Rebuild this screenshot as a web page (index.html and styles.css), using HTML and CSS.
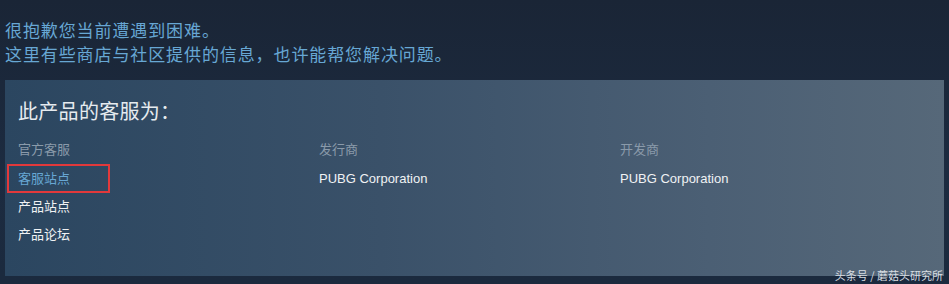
FILE: index.html
```html
<!DOCTYPE html>
<html lang="zh">
<head>
<meta charset="utf-8">
<link rel="stylesheet" href="styles.css">
</head>
<body>
<div class="page">
  <div class="intro">
    <p>很抱歉您当前遭遇到困难。</p>
    <p>这里有些商店与社区提供的信息，也许能帮您解决问题。</p>
  </div>
  <div class="panel">
    <h2 class="title">此产品的客服为：</h2>
    <div class="cols">
      <div class="col">
        <div class="label">官方客服</div>
        <a class="link link-blue highlighted">客服站点</a>
        <a class="link">产品站点</a>
        <a class="link">产品论坛</a>
      </div>
      <div class="col">
        <div class="label">发行商</div>
        <a class="link">PUBG Corporation</a>
      </div>
      <div class="col">
        <div class="label">开发商</div>
        <a class="link">PUBG Corporation</a>
      </div>
    </div>
  </div>
  <div class="watermark">头条号 / 蘑菇头研究所</div>
</div>
</body>
</html>
```
FILE: styles.css
```css
html, body {
  margin: 0;
  padding: 0;
  background: #1b2a3e;
  width: 949px;
  height: 284px;
  overflow: hidden;
}
.page {
  position: relative;
  height: 284px;
  padding: 18px 5px 0 5px;
  box-sizing: border-box;
  background: linear-gradient(180deg, #1a2536 0%, #1c2b40 60%, #1b2a3e 100%);
  font-family: "Noto Sans CJK SC", "Liberation Sans", sans-serif;
}
.intro p {
  margin: 0;
  font-size: 17px;
  letter-spacing: 0.9px;
  line-height: 24px;
  color: #67a7d4;
}
.panel {
  margin-top: 14px;
  width: 939px;
  height: 196px;
  box-sizing: border-box;
  padding: 18px 13px 0 13px;
  background: linear-gradient(90deg, #2b4660 0%, #3a5169 40%, #4b5f74 75%, #566879 100%);
}
.title {
  margin: 0;
  font-size: 20px;
  font-weight: normal;
  line-height: 26px;
  letter-spacing: 0.3px;
  color: #e6ebef;
}
.cols {
  display: grid;
  grid-template-columns: 301px 301px 1fr;
  margin-top: 15px;
}
.col {
  display: flex;
  flex-direction: column;
}
.label {
  font-size: 13px;
  line-height: 20px;
  color: #8a9aaa;
  margin-bottom: 10px;
}
.link {
  font-size: 13px;
  line-height: 20px;
  height: 28px;
  color: #f0f2f4;
  font-family: "Liberation Sans", "Noto Sans CJK SC", sans-serif;
}
.link-blue {
  color: #67a7d4;
}
.highlighted {
  position: relative;
}
.highlighted::after {
  content: "";
  position: absolute;
  left: -11px;
  top: -5px;
  width: 99px;
  height: 25px;
  border: 2.5px solid #e2393b;
}
.watermark {
  position: absolute;
  right: 6px;
  bottom: 2px;
  font-size: 11px;
  line-height: 14px;
  color: #d8dde2;
}
```
